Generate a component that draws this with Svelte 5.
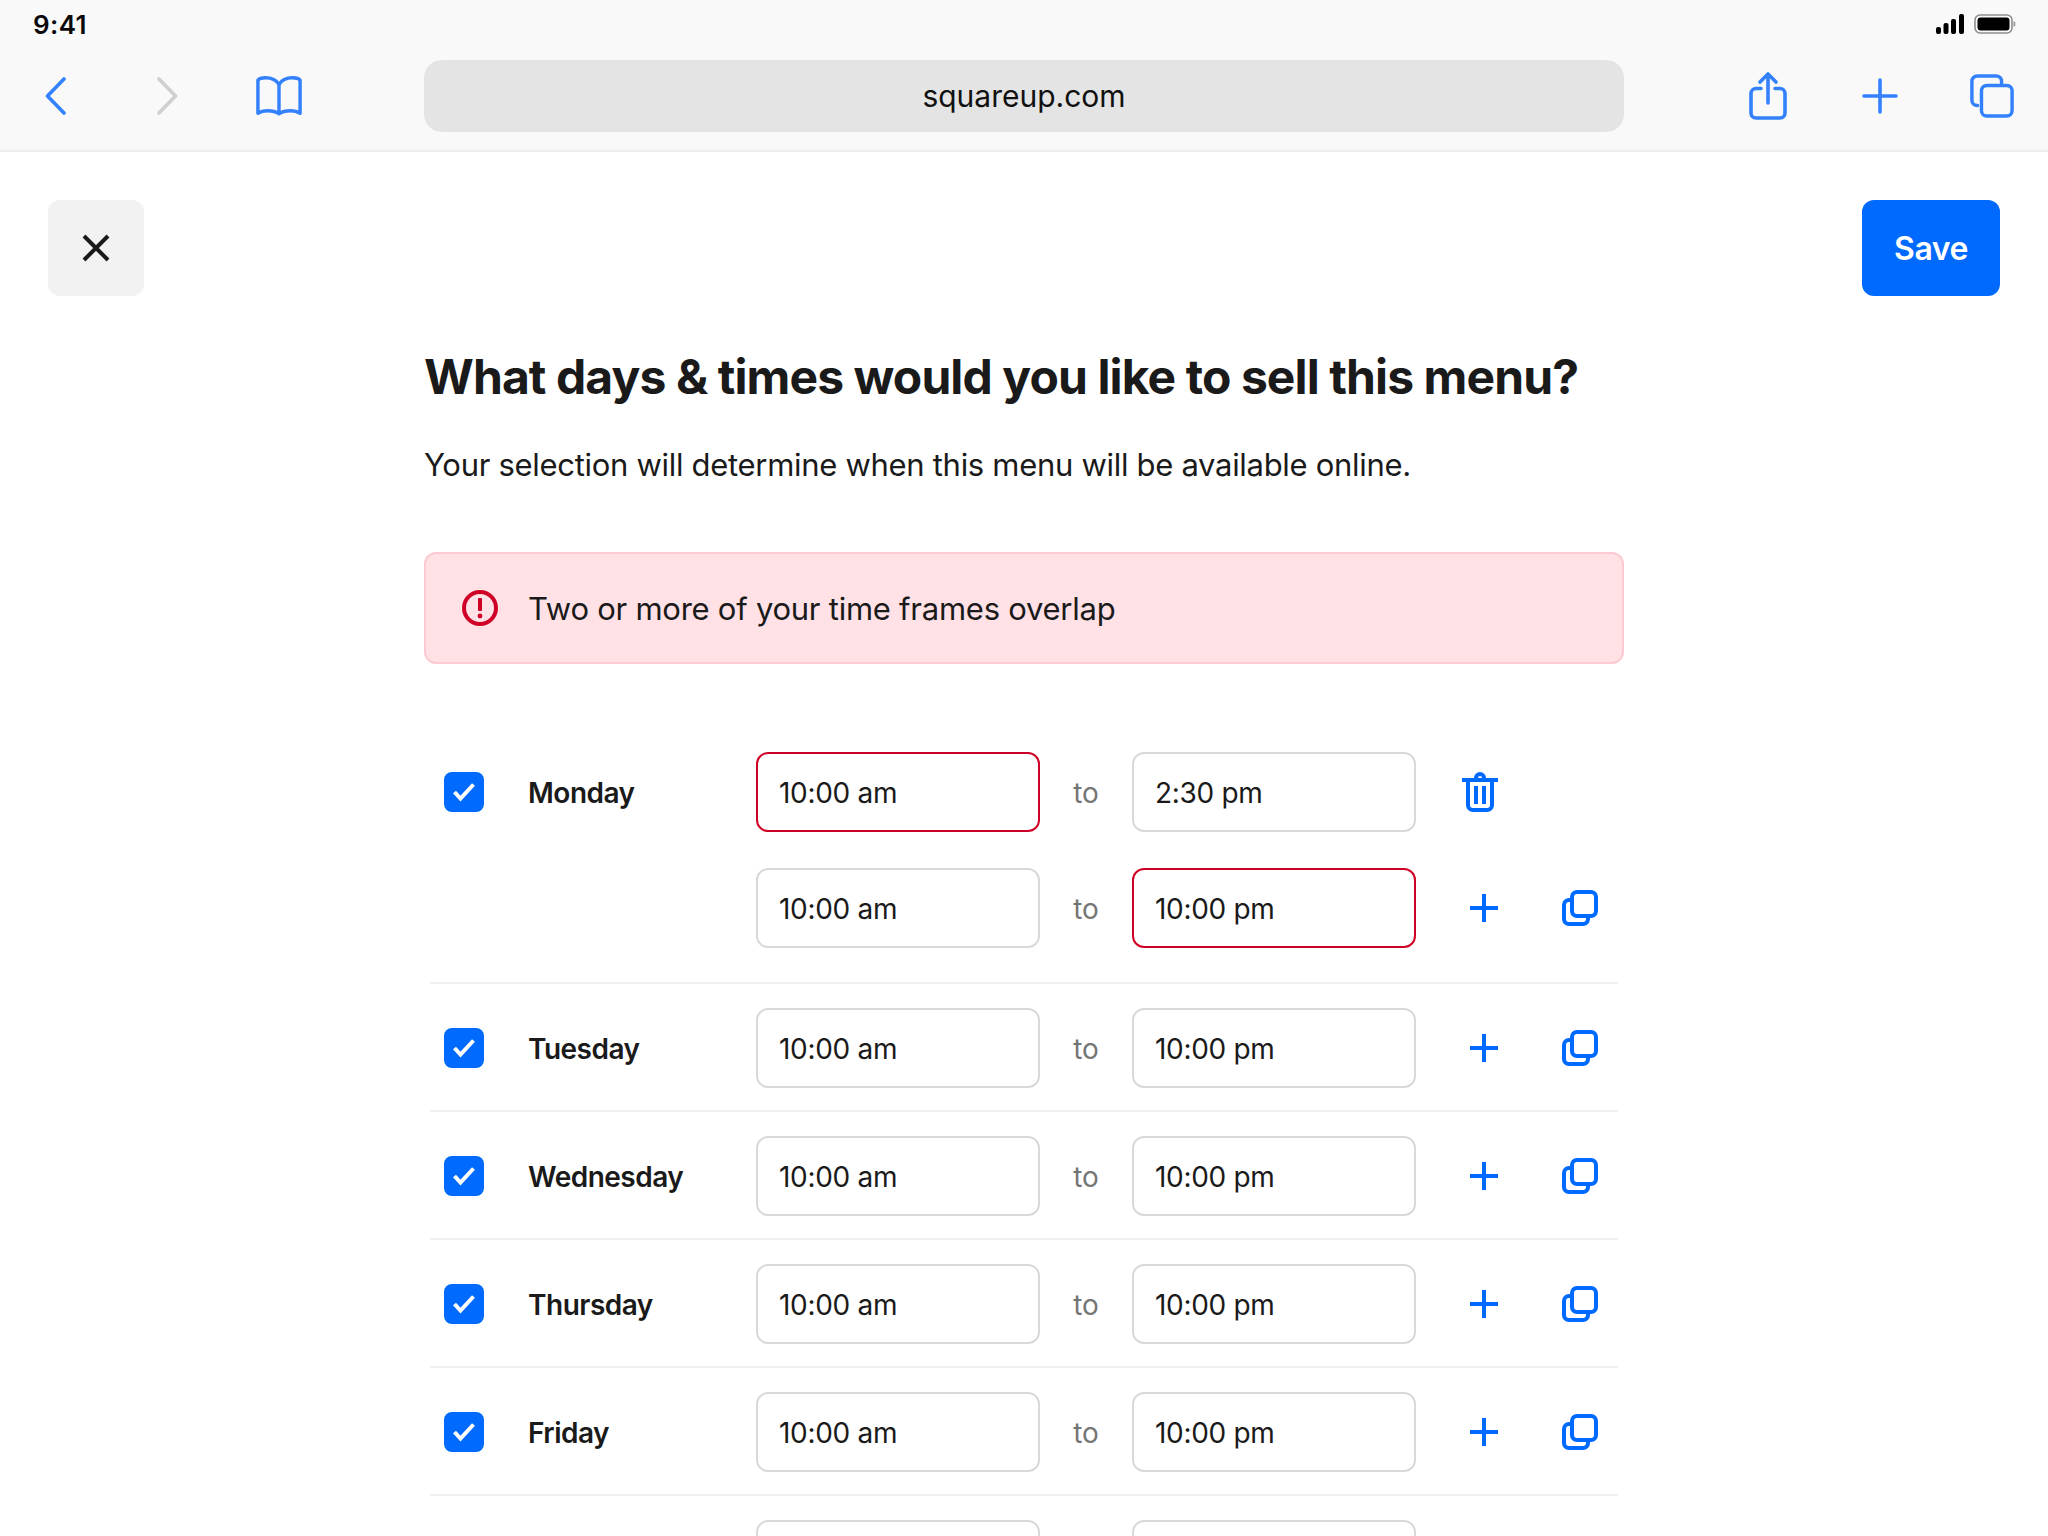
<script>
  const rows = [
    { day: 'Monday', slots: [
      { from: '10:00 am', to: '2:30 pm', fromErr: true, del: true },
      { from: '10:00 am', to: '10:00 pm', toErr: true }
    ] },
    { day: 'Tuesday', slots: [{ from: '10:00 am', to: '10:00 pm' }] },
    { day: 'Wednesday', slots: [{ from: '10:00 am', to: '10:00 pm' }] },
    { day: 'Thursday', slots: [{ from: '10:00 am', to: '10:00 pm' }] },
    { day: 'Friday', slots: [{ from: '10:00 am', to: '10:00 pm' }] }
  ];
</script>

<div class="page">
  <div class="chrome">
    <div class="status">
      <span class="time">9:41</span>
      <div class="status-icons">
        <svg width="28" height="20" viewBox="0 0 28 20"><rect x="0" y="13" width="5" height="7" rx="2"/><rect x="7.500" y="9" width="5" height="11" rx="2"/><rect x="15" y="5" width="5" height="15" rx="2"/><rect x="23" y="0" width="5" height="20" rx="2"/></svg>
        <svg width="42" height="20" viewBox="0 0 42 20"><rect x="1" y="1" width="37" height="18" rx="5" fill="none" stroke="#8e8e8e" stroke-width="1.600"/><rect x="3.500" y="3.500" width="32" height="13" rx="3" fill="#000"/><path d="M39.500 7v6c1.200-.4 2-1.600 2-3s-.8-2.600-2-3z" fill="#9a9a9a"/></svg>
      </div>
    </div>
    <div class="toolbar">
      <div class="tool-left">
        <svg class="ti back" width="22" height="38" viewBox="0 0 22 38"><path d="M19 2 2.500 19 19 36"/></svg>
        <svg class="ti off" width="22" height="38" viewBox="0 0 22 38"><path d="M3 2l16.500 17L3 36"/></svg>
        <svg class="ti book" width="46" height="42" viewBox="0 0 48 42"><path d="M24 9C21 4 16 2 10 2 6 2 3 3 2 4.500V39c3-2 6-2.600 10-2.600 5 0 9 1 12 3.100 3-2.100 7-3.100 12-3.100 4 0 7 .6 10 2.600V4.500C45 3 42 2 38 2c-6 0-11 2-14 7zM24 9v30"/></svg>
      </div>
      <div class="url">squareup.com</div>
      <div class="tool-right">
        <svg class="ti" width="38" height="48" viewBox="0 0 38 48"><path d="M12 16.500H7a5 5 0 0 0-5 5V41a5 5 0 0 0 5 5h24a5 5 0 0 0 5-5V21.500a5 5 0 0 0-5-5h-5M19 31V2.500M11 10l8-8 8 8"/></svg>
        <svg class="ti" width="36" height="36" viewBox="0 0 36 36"><path d="M18 2v32M2 18h32"/></svg>
        <svg class="ti" width="44" height="44" viewBox="0 0 46 46"><path d="M8 33H7.500A5.500 5.500 0 0 1 2 27.500V7.500A5.500 5.500 0 0 1 7.500 2h20A5.500 5.500 0 0 1 33 7.500V10"/><rect x="12" y="12" width="32" height="32" rx="5.500"/></svg>
      </div>
    </div>
  </div>

  <div class="actions">
    <button class="close" aria-label="Close">
      <svg width="28" height="28" viewBox="0 0 28 28"><path d="M2 2l24 24M26 2 2 26"/></svg>
    </button>
    <button class="save">Save</button>
  </div>

  <main>
    <h1>What days &amp; times would you like to sell this menu?</h1>
    <p class="sub">Your selection will determine when this menu will be available online.</p>

    <div class="alert">
      <svg width="36" height="36" viewBox="0 0 36 36"><circle cx="18" cy="18" r="16" fill="none" stroke="#cf0025" stroke-width="4"/><rect x="16" y="8" width="4" height="13" rx="1" fill="#cf0025"/><circle cx="18" cy="26" r="2.400" fill="#cf0025"/></svg>
      <span>Two or more of your time frames overlap</span>
    </div>

    <div class="list">
      {#each rows as row}
        <section class="day" class:multi={row.slots.length > 1}>
          <span class="check">
            <svg width="24" height="20" viewBox="0 0 24 20"><path d="M2.500 10 8.500 16.500 21.500 2.500"/></svg>
          </span>
          <span class="name">{row.day}</span>
          <div class="slots">
            {#each row.slots as s}
              <div class="slot">
                <div class="field" class:err={s.fromErr}>{s.from}</div>
                <span class="to">to</span>
                <div class="field" class:err={s.toErr}>{s.to}</div>
                {#if s.del}
                  <svg class="bi trash" width="36" height="40" viewBox="0 0 36 40"><path d="M0 8h36M6 8v25a5 5 0 0 0 5 5h14a5 5 0 0 0 5-5V8M14 8V6a4 4 0 0 1 8 0v2M14 14v18M22 14v18"/></svg>
                {:else}
                  <svg class="bi plus" width="28" height="28" viewBox="0 0 28 28"><path d="M14 0v28M0 14h28"/></svg>
                  <svg class="bi copy" width="36" height="36" viewBox="0 0 36 36"><rect x="10" y="2" width="24" height="24" rx="5"/><path d="M8 10H7a5 5 0 0 0-5 5v14a5 5 0 0 0 5 5h14a5 5 0 0 0 5-5v-1"/></svg>
                {/if}
              </div>
            {/each}
          </div>
        </section>
      {/each}
      <section class="day">
        <span class="check-space"></span>
        <span class="name"></span>
        <div class="slot">
          <div class="field"></div>
          <span class="to"></span>
          <div class="field"></div>
        </div>
      </section>
    </div>
  </main>
</div>

<style>
  :global(body) { margin: 0; background: #fff; }
  .page { height: 1536px; overflow: hidden; font-family: Inter, "Liberation Sans", sans-serif; color: #1a1a1a; }

  .chrome { height: 150px; background: #f9f9f9; border-bottom: 2px solid #ededed; }
  .status { display: flex; justify-content: space-between; align-items: center; height: 48px; padding: 0 32px 0 33px; }
  .time { font-size: 26px; font-weight: 600; letter-spacing: .4px; color: #0a0a0a; }
  .status-icons { display: flex; gap: 10px; align-items: center; }
  .toolbar { display: flex; align-items: center; height: 72px; margin-top: 12px; }
  .ti { fill: none; stroke: #3381fd; stroke-width: 3.600; stroke-linecap: round; stroke-linejoin: round; display: block; flex: none; }
  .ti.off { stroke: #cfcfcf; }
  .tool-left { width: 424px; box-sizing: border-box; padding-left: 45px; display: flex; align-items: center; }
  .tool-left .off { margin-left: 89px; }
  .tool-left .book { margin-left: 78px; }
  .url { width: 1200px; height: 72px; background: #e4e4e4; border-radius: 18px; display: flex; align-items: center; justify-content: center; font-size: 30px; color: #111; }
  .tool-right { flex: 1; display: flex; align-items: center; padding-left: 125px; gap: 75px; }
  .tool-right svg:last-child { margin-left: -3px; }

  .actions { display: flex; justify-content: space-between; padding: 48px 48px 0; }
  button { border: 0; padding: 0; font: inherit; }
  .close { width: 96px; height: 96px; border-radius: 12px; background: #f2f2f2; display: flex; align-items: center; justify-content: center; }
  .close path { fill: none; stroke: #1a1a1a; stroke-width: 4; }
  .save { width: 138px; height: 96px; border-radius: 12px; background: #006aff; color: #fff; font-size: 32px; font-weight: 600; letter-spacing: -.5px; }

  main { width: 1200px; margin: 0 auto; }
  h1 { margin: 52px 0 0; font-size: 48px; line-height: 58px; font-weight: 700; letter-spacing: -.9px; color: #1a1a1a; }
  .sub { margin: 39px 0 0; font-size: 31px; line-height: 40px; font-weight: 380; letter-spacing: -.3px; color: #1a1a1a; }

  .alert { margin-top: 67px; height: 112px; box-sizing: border-box; border: 2px solid #ffc9d2; border-radius: 12px; background: #ffe1e6; display: flex; align-items: center; gap: 30px; padding-left: 36px; font-size: 31px; font-weight: 380; letter-spacing: -.25px; }
  .list { margin-top: 64px; }
  .day { display: flex; margin: 0 6px; padding: 24px 0 22px; border-bottom: 2px solid #f0f0f0; }
  .day.multi { padding-bottom: 34px; }
  .check { width: 40px; height: 40px; margin: 20px 44px 0 14px; border-radius: 8px; background: #006aff; display: flex; align-items: center; justify-content: center; flex: none; }
  .check-space { width: 98px; flex: none; }
  .check path { fill: none; stroke: #fff; stroke-width: 4; }
  .name { width: 228px; height: 80px; display: flex; align-items: center; font-size: 28px; font-weight: 600; letter-spacing: -.5px; padding-top: 1px; box-sizing: border-box; flex: none; }
  .slots { display: flex; flex-direction: column; gap: 36px; }
  .slot { display: flex; align-items: center; height: 80px; }
  .field { width: 284px; height: 80px; box-sizing: border-box; border: 2px solid #d9d9d9; border-radius: 12px; padding: 1px 0 0 21px; display: flex; align-items: center; font-size: 28px; font-weight: 380; letter-spacing: -.3px; }
  .field.err { border-color: #cf0025; }
  .to { width: 92px; text-align: center; font-size: 28px; font-weight: 380; color: #757575; padding-top: 1px; }
  .bi { fill: none; stroke: #006aff; stroke-width: 4; display: block; flex: none; }
  .trash { margin-left: 46px; }
  .plus { margin-left: 54px; }
  .copy { margin-left: 64px; }
</style>
